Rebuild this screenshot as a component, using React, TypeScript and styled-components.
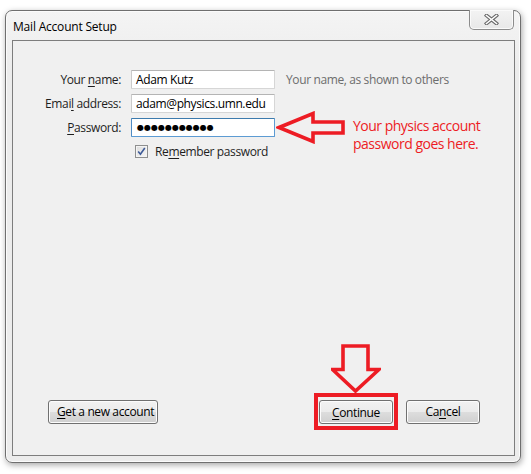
import React from "react";
import styled, { createGlobalStyle } from "styled-components";

const Global = createGlobalStyle`
  html, body { margin: 0; padding: 0; background: #ffffff; }
  body { width: 531px; height: 474px; overflow: hidden; font-family: "Open Sans", "Noto Sans", sans-serif; }
`;

const UI_FONT = `"Open Sans", "Noto Sans", sans-serif`;

const Page = styled.div`
  padding: 10px 10px 11px 5px;
  width: 531px;
  height: 474px;
  box-sizing: border-box;
`;

const Window = styled.div`
  position: relative;
  width: 516px;
  height: 453px;
  box-sizing: border-box;
  border: 1px solid #6f6f6f;
  border-radius: 7px;
  background: linear-gradient(180deg, #f4f4f4 0%, #ececec 60px, #ececec 100%);
  box-shadow: 1px 2px 6px rgba(0, 0, 0, 0.35), inset 0 0 0 1px #fbfbfb;
  display: flex;
  flex-direction: column;
`;

const TitleBar = styled.div`
  height: 29px;
  display: flex;
  align-items: center;
  padding-left: 7px;
  position: relative;
`;

const Title = styled.span`
  font-family: ${UI_FONT};
  font-size: 12px;
  letter-spacing: -0.2px;
  color: #000000;
  margin-top: 1px;
`;

const CloseButton = styled.div`
  position: absolute;
  top: -1px;
  right: 6px;
  width: 45px;
  height: 20px;
  box-sizing: border-box;
  border: 1px solid #8c8c8c;
  border-top: none;
  border-radius: 0 0 5px 5px;
  background: linear-gradient(180deg, #f3f3f3 0%, #e8e8e8 100%);
  box-shadow: inset 0 0 0 1px #fafafa;
  display: flex;
  align-items: center;
  justify-content: center;
`;

const Panel = styled.div`
  position: relative;
  flex: 1;
  margin: 0 5px 6px 6px;
  border: 1px solid #7d7d7d;
  background: #f0f0f0;
  display: flex;
  flex-direction: column;
`;

const Form = styled.div`
  display: grid;
  grid-template-columns: 108px 144px auto;
  column-gap: 10px;
  row-gap: 5px;
  padding-top: 29px;
  align-items: center;
`;

const Label = styled.label`
  font-family: ${UI_FONT};
  font-size: 12px;
  letter-spacing: -0.38px;
  color: #1e1e1e;
  text-align: right;
  white-space: nowrap;
`;

const U = styled.span`
  text-decoration: underline;
  text-underline-offset: 2px;
`;

const Input = styled.div<{ $focused?: boolean }>`
  height: 19px;
  box-sizing: border-box;
  border: 1px solid ${(p) => (p.$focused ? "#5c9bd3" : "#d6d6d6")};
  border-top-color: ${(p) => (p.$focused ? "#3d7bad" : "#b4b4b4")};
  border-left-color: ${(p) => (p.$focused ? "#4f8cc4" : "#cbcbcb")};
  border-radius: 1px;
  background: #ffffff;
  padding: 0 4px;
  display: flex;
  align-items: center;
  font-family: ${UI_FONT};
  font-size: 12px;
  letter-spacing: -0.38px;
  color: #000000;
  white-space: nowrap;
  overflow: hidden;
`;

const Dots = styled.span`
  font-family: "DejaVu Sans", sans-serif;
  font-size: 8px;
  letter-spacing: 0;
  color: #000;
  padding-left: 1px;
`;

const Hint = styled.span`
  font-family: ${UI_FONT};
  font-size: 12px;
  letter-spacing: -0.38px;
  color: #6d6d6d;
  margin-left: 1px;
  white-space: nowrap;
`;

const CheckRow = styled.div`
  grid-column: 2 / 4;
  display: flex;
  align-items: center;
  gap: 7px;
  padding-left: 4px;
  margin-top: 1px;
`;

const CheckBox = styled.span`
  width: 13px;
  height: 13px;
  box-sizing: border-box;
  border: 1px solid #8e8f8f;
  background: linear-gradient(135deg, #dcdcdc 0%, #f6f6f6 100%);
  box-shadow: inset 0 0 0 1px #f4f4f4;
  display: flex;
  align-items: center;
  justify-content: center;
`;

const CheckLabel = styled.span`
  font-family: ${UI_FONT};
  font-size: 12px;
  letter-spacing: -0.38px;
  color: #1e1e1e;
`;

const Spacer = styled.div`
  flex: 1;
`;

const ButtonRow = styled.div`
  display: flex;
  align-items: center;
  padding: 0 34px 25px 35px;
  gap: 8px;
`;

const Button = styled.button`
  display: block;
  height: 24px;
  min-width: 74px;
  box-sizing: border-box;
  padding: 0 8px;
  border: 1px solid #707070;
  border-radius: 3px;
  background: linear-gradient(180deg, #f2f2f2 0%, #ebebeb 50%, #dddddd 51%, #cfcfcf 100%);
  box-shadow: inset 0 0 0 1px #fcfcfc;
  font-family: ${UI_FONT};
  font-size: 12px;
  line-height: 21px;
  letter-spacing: -0.38px;
  color: #000000;
  text-align: center;
  white-space: nowrap;
  cursor: default;
`;

const WideButton = styled(Button)`
  width: 110px;
`;

const Highlight = styled.div`
  position: relative;
  border: 4px solid #ed1c24;
  padding: 3px 1px 2px 1px;
  display: flex;
`;

const DownArrow = styled.svg`
  position: absolute;
  left: 50%;
  bottom: calc(100% + 3px);
  margin-left: -25px;
`;

const LeftArrow = styled.svg`
  position: absolute;
  left: 263px;
  top: 70px;
`;

const Annotation = styled.div`
  position: absolute;
  left: 340px;
  top: 76px;
  font-family: ${UI_FONT};
  font-size: 14px;
  line-height: 18px;
  letter-spacing: -0.5px;
  color: #ed1c24;
`;

export default function App() {
  return (
    <>
      <Global />
      <Page>
        <Window>
          <TitleBar>
            <Title>Mail Account Setup</Title>
            <CloseButton>
              <svg width="15" height="11" viewBox="0 0 15 11">
                <path d="M2.5 1.5 L12.5 9.5 M12.5 1.5 L2.5 9.5" stroke="#6a6a6a" strokeWidth="3.6" strokeLinecap="square" fill="none" />
                <path d="M2.5 1.5 L12.5 9.5 M12.5 1.5 L2.5 9.5" stroke="#ffffff" strokeWidth="1.6" strokeLinecap="square" fill="none" />
              </svg>
            </CloseButton>
          </TitleBar>
          <Panel>
            <Form>
              <Label>
                Your <U>n</U>ame:
              </Label>
              <Input>Adam Kutz</Input>
              <Hint>Your name, as shown to others</Hint>

              <Label>
                Emai<U>l</U> address:
              </Label>
              <Input>adam@physics.umn.edu</Input>
              <span />

              <Label>
                <U>P</U>assword:
              </Label>
              <Input $focused>
                <Dots>●●●●●●●●●●●</Dots>
              </Input>
              <span />

              <span />
              <CheckRow>
                <CheckBox>
                  <svg width="9" height="9" viewBox="0 0 9 9">
                    <path d="M1.2 4.6 L3.4 7.2 L7.8 1" stroke="#3d5a98" strokeWidth="1.6" fill="none" />
                  </svg>
                </CheckBox>
                <CheckLabel>
                  Re<U>m</U>ember password
                </CheckLabel>
              </CheckRow>
            </Form>

            <LeftArrow width="70" height="33" viewBox="0 0 70 33">
              <polygon
                points="3,16.5 37,2.5 37,11 67,11 67,22 37,22 37,30.5"
                fill="#f0f0f0"
                stroke="#ed1c24"
                strokeWidth="3.6"
                strokeLinejoin="miter"
              />
            </LeftArrow>
            <Annotation>
              Your physics account
              <br />
              password goes here.
            </Annotation>

            <Spacer />
            <ButtonRow>
              <WideButton>
                <U>G</U>et a new account
              </WideButton>
              <Spacer />
              <Highlight>
                <DownArrow width="50" height="50" viewBox="0 0 50 50">
                  <polygon
                    points="12,2 37,2 37,25.5 48,25.5 24.5,47 1.5,25.5 12,25.5"
                    fill="#f0f0f0"
                    stroke="#ed1c24"
                    strokeWidth="3.6"
                    strokeLinejoin="miter"
                  />
                </DownArrow>
                <Button>
                  <U>C</U>ontinue
                </Button>
              </Highlight>
              <Button>
                Ca<U>n</U>cel
              </Button>
            </ButtonRow>
          </Panel>
        </Window>
      </Page>
    </>
  );
}
